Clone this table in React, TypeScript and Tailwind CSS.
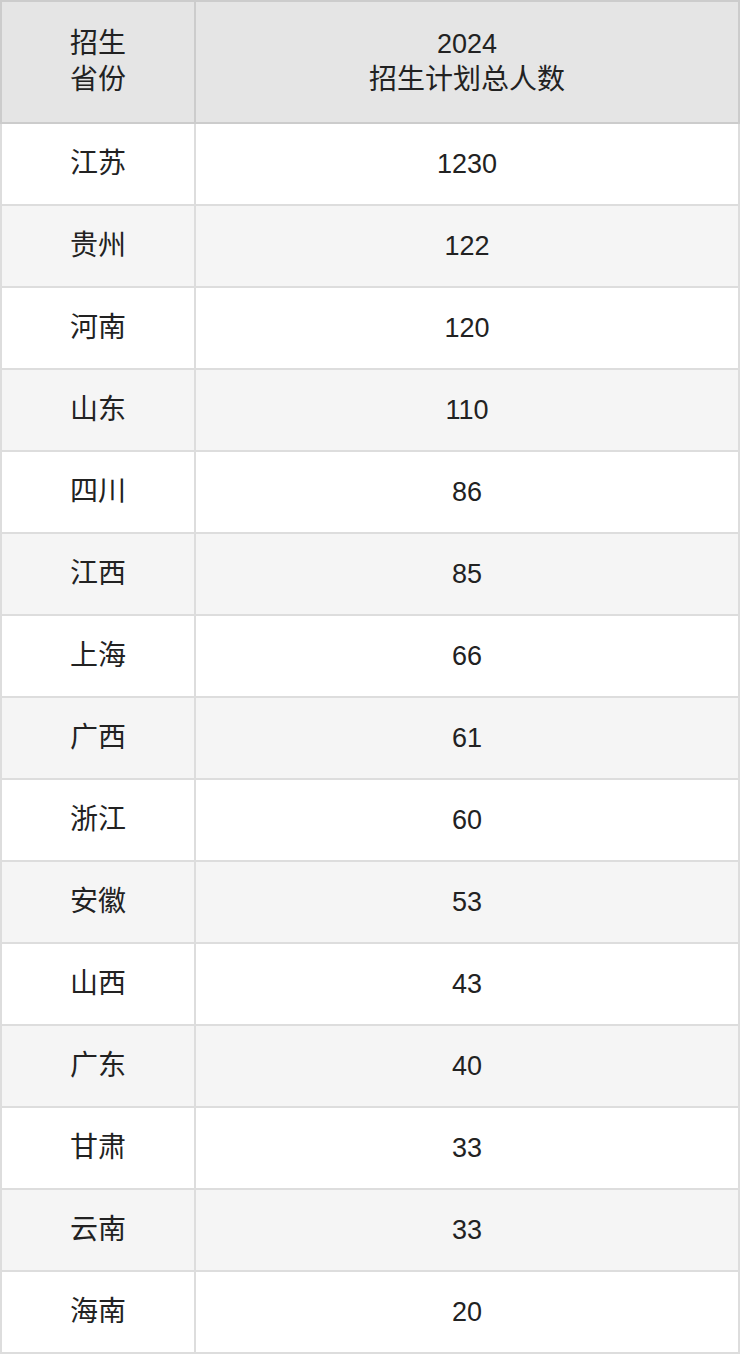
const rows: [string, string][] = [
  ['江苏', '1230'],
  ['贵州', '122'],
  ['河南', '120'],
  ['山东', '110'],
  ['四川', '86'],
  ['江西', '85'],
  ['上海', '66'],
  ['广西', '61'],
  ['浙江', '60'],
  ['安徽', '53'],
  ['山西', '43'],
  ['广东', '40'],
  ['甘肃', '33'],
  ['云南', '33'],
  ['海南', '20'],
];

export default function App() {
  return (
    <div className="w-[740px] bg-white font-['Liberation_Sans','Noto_Sans_CJK_SC',sans-serif] text-[27px] leading-[36px] text-[#222]">
      <table className="w-full border-collapse border-2 border-[#ddd] text-center">
        <thead>
          <tr className="h-[122px] bg-[#e5e5e5]">
            <th className="w-[194px] border-2 border-[#ccc] text-[28px] font-normal">
              招生
              <br />
              省份
            </th>
            <th className="border-2 border-[#ccc] font-normal">
              2024
              <br />
              <span className="text-[28px]">招生计划总人数</span>
            </th>
          </tr>
        </thead>
        <tbody>
          {rows.map(([prov, num], i) => (
            <tr key={prov + i} className={`h-[82px] ${i % 2 === 1 ? 'bg-[#f5f5f5]' : 'bg-white'}`}>
              <td className="border-2 border-[#ddd] text-[28px]">{prov}</td>
              <td className="border-2 border-[#ddd]">{num}</td>
            </tr>
          ))}
        </tbody>
      </table>
    </div>
  );
}
